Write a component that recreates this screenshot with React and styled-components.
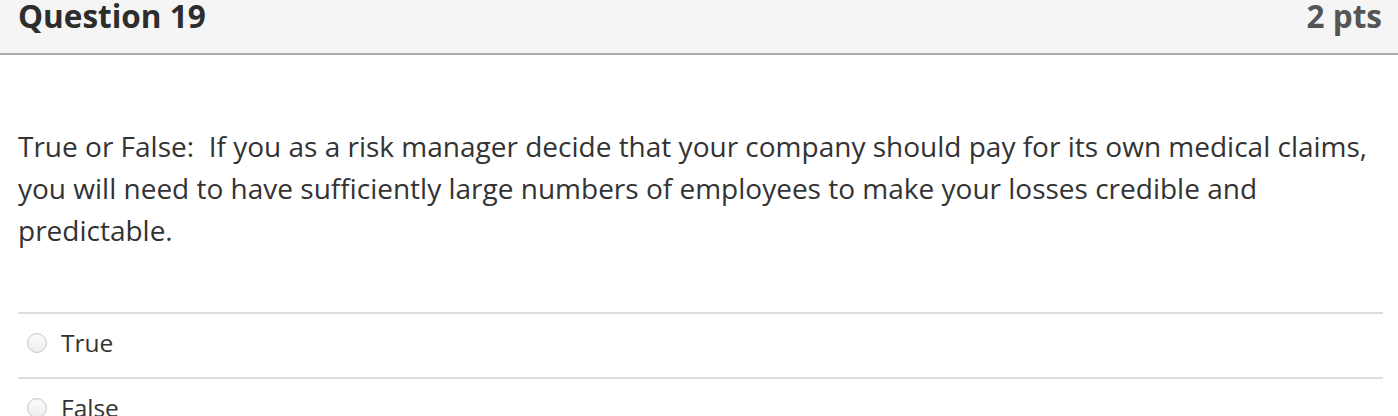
import React from 'react';
import styled, { createGlobalStyle } from 'styled-components';

const GlobalStyle = createGlobalStyle`
    body {
        margin: 0;
        background: #fff;
        font-family: "Open Sans", "Liberation Sans", sans-serif;
    }
`;

const Page = styled.div`
    width: 1398px;
    height: 416px;
    overflow: hidden;
    background: #fff;
`;

const Header = styled.div`
    display: flex;
    justify-content: space-between;
    align-items: flex-start;
    height: 53px;
    padding: 0 16px 0 18px;
    background: #f5f5f5;
    border-bottom: 2px solid #aaa;
`;

const Title = styled.h2`
    margin: 0;
    font-size: 31.5px;
    line-height: 32px;
    font-weight: 700;
    color: ${(p) => p.$color || '#2d2d2d'};
`;

const Body = styled.div`
    padding: 70px 15px 0 18px;
`;

const QuestionText = styled.p`
    margin: 0;
    font-size: 28px;
    line-height: 42px;
    color: #333;
`;

const Answers = styled.div`
    margin-top: 61px;
`;

const AnswerRow = styled.label`
    display: flex;
    align-items: center;
    gap: 14px;
    padding: 11px 0 16px 9px;
    border-top: 2px solid #ddd;
    font-size: 24.5px;
    line-height: 36px;
    color: #333;
`;

const Radio = styled.span`
    flex: none;
    width: 18px;
    height: 18px;
    border-radius: 50%;
    border: 1px solid #c8c8c8;
    background: linear-gradient(#fdfdfd, #ececec);
    box-shadow: inset 0 1px 1px rgba(0, 0, 0, 0.05);
`;

const App = () => {
    const answers = ['True', 'False'];

    return (
        <React.Fragment>
            <GlobalStyle />
            <Page>
                <Header>
                    <Title>Question 19</Title>
                    <Title $color="#555">2 pts</Title>
                </Header>

                <Body>
                    <QuestionText>
                        True or False:&nbsp; If you as a risk manager decide that your company should pay for its own medical claims, you will need to have sufficiently large numbers of employees to make your losses credible and predictable.
                    </QuestionText>

                    <Answers>
                        {answers.map((a) => (
                            <AnswerRow key={a}>
                                <Radio />
                                {a}
                            </AnswerRow>
                        ))}
                    </Answers>
                </Body>
            </Page>
        </React.Fragment>
    );
};

export default App;
